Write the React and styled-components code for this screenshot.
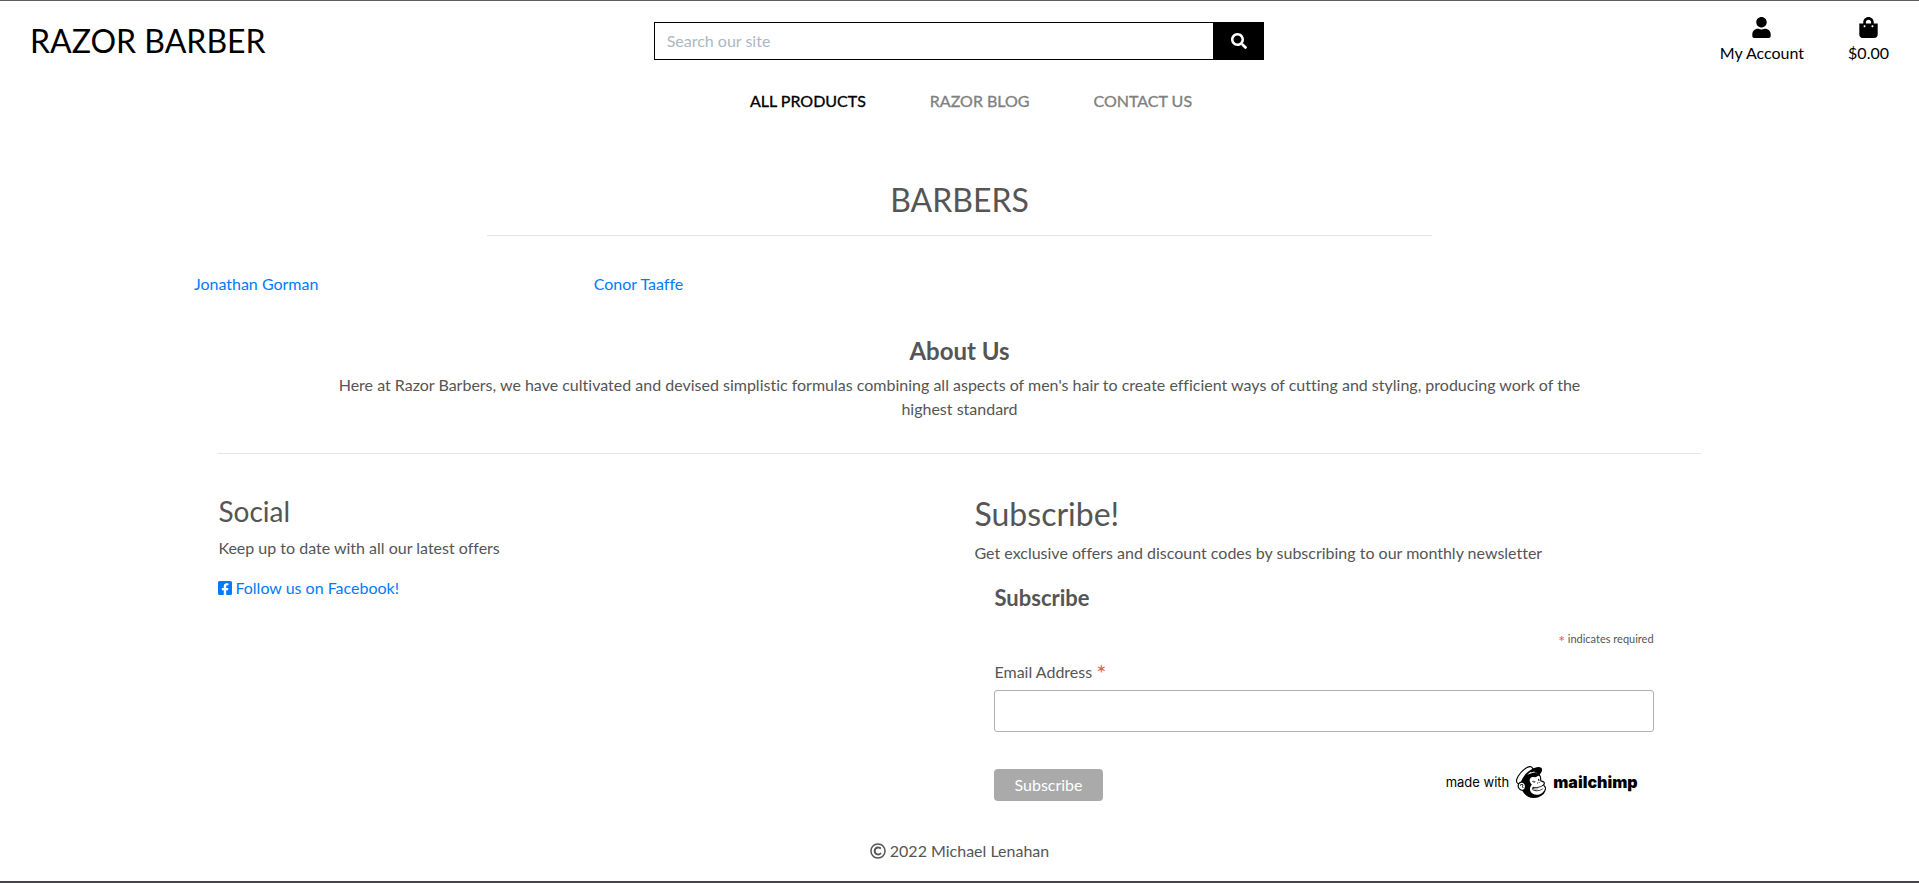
import React from 'react';
import styled, { createGlobalStyle } from 'styled-components';
import { FaUser, FaShoppingBag, FaSearch, FaFacebookSquare, FaRegCopyright } from 'react-icons/fa';
import { SiMailchimp } from 'react-icons/si';

const GlobalStyle = createGlobalStyle`
  *, *::before, *::after { box-sizing: border-box; }
  body {
    margin: 0;
    background: #fff;
    color: #555;
    font: 400 16px/24px Lato, "Liberation Sans", sans-serif;
    font-variant-ligatures: none;
  }
  h1, h2, h3, h4, p, ul { margin: 0; padding: 0; font-weight: 400; }
  ul { list-style: none; }
  a { color: #007bff; text-decoration: none; }
  input, button { font: inherit; margin: 0; }
`;

const Page = styled.div`
  display: flex;
  flex-direction: column;
  min-height: 100vh;
  border-top: 1px solid #5f5b62;
  border-bottom: 2px solid #48444c;
`;

const TopBar = styled.header`
  display: grid;
  grid-template-columns: repeat(3, 1fr);
  align-items: center;
  padding-top: 16px;
`;

const Brand = styled.a`
  padding-left: 30px;
  color: #000;
  font-size: 32px;
  line-height: 38px;
`;

const SearchForm = styled.form`
  display: flex;
  height: 38px;
  margin: 0 15px 0 14px;
`;

const SearchInput = styled.input`
  flex: 1;
  min-width: 0;
  padding: 0 12px;
  border: 1px solid #000;
  border-radius: 0;
  outline: none;
  &::placeholder { color: #aab7c4; opacity: 1; }
`;

const SearchButton = styled.button`
  display: flex;
  align-items: center;
  justify-content: center;
  width: 50px;
  padding: 0;
  border: 0;
  background: #000;
  color: #fff;
`;

const AccountLinks = styled.ul`
  display: flex;
  justify-content: flex-end;
  gap: 44px;
  padding-right: 30px;
`;

const AccountLink = styled.a`
  display: flex;
  flex-direction: column;
  align-items: center;
  gap: 3px;
  color: #000;
`;

const Nav = styled.nav`
  display: flex;
  justify-content: center;
  gap: 64px;
  margin-top: 24px;
  padding-left: 23px;
`;

const NavLink = styled.a`
  color: ${(p) => (p.$active ? '#000' : '#808080')};
  -webkit-text-stroke: 1px ${(p) => (p.$active ? '#000' : '#808080')};
  -webkit-text-stroke-width: thin;
`;

const PageTitle = styled.h2`
  margin-top: 68px;
  font-size: 32px;
  line-height: 38px;
  text-align: center;
`;

const Rule = styled.hr`
  width: ${(p) => p.$width};
  height: 1px;
  margin: ${(p) => p.$space};
  border: 0;
  background: #e5e5e5;
`;

const BarberList = styled.ul`
  display: grid;
  grid-template-columns: repeat(4, 1fr);
  width: 83.3333%;
  margin: 36px auto 0;
`;

const Barber = styled.li`
  padding: 0 34px;
`;

const About = styled.section`
  width: 66.6667%;
  margin: 40px auto 0;
  padding: 0 15px;
  text-align: center;
`;

const StrongHeading = styled.h4`
  margin-bottom: ${(p) => p.$below};
  font-size: ${(p) => p.$size};
  line-height: 29px;
  font-weight: 700;
`;

const Footer = styled.footer`
  width: 78.8%;
  margin: 32px auto 0;
  padding: 0 15px;
`;

const Columns = styled.div`
  display: grid;
  grid-template-columns: repeat(2, 1fr);
  column-gap: 30px;
`;

const SectionHeading = styled.h3`
  margin-bottom: 8px;
  font-size: ${(p) => p.$size};
  line-height: ${(p) => p.$line};
`;

const SocialLink = styled.a`
  display: flex;
  align-items: center;
  gap: 3px;
  margin-top: 16px;

  svg { width: 14px; height: 16px; }
`;

const SignupForm = styled.form`
  margin-top: 18px;
  padding: 0 47px 0 20px;
`;

const RequiredNote = styled.p`
  margin-bottom: 12px;
  font-size: 11px;
  line-height: 18px;
  text-align: right;
`;

const Asterisk = styled.span`
  color: #e85c41;
  font-size: ${(p) => p.$size};
  line-height: 0;
  vertical-align: -4px;
`;

const FieldLabel = styled.label`
  display: block;
  margin-bottom: 6px;
`;

const EmailInput = styled.input`
  display: block;
  width: 100%;
  height: 42px;
  padding: 8px;
  border: 1px solid #abb0b2;
  border-radius: 3px;
`;

const FormActions = styled.div`
  display: flex;
  align-items: flex-start;
  justify-content: space-between;
  margin-top: 34px;
  padding-right: 16px;
`;

const SubmitButton = styled.button`
  height: 32px;
  margin-top: 3px;
  padding: 0 20px;
  border: 0;
  border-radius: 4px;
  background: #aaa;
  color: #fff;
`;

const MailchimpBadge = styled.a`
  display: flex;
  align-items: center;
  gap: 6px;
  color: #000;
  font-family: Inter, sans-serif;
  font-size: 13px;
`;

const MailchimpName = styled.span`
  font-size: 16px;
  font-weight: 900;
`;

const Copyright = styled.p`
  display: flex;
  align-items: center;
  justify-content: center;
  gap: 4px;
  margin-top: 38px;
`;

const barbers = ['Jonathan Gorman', 'Conor Taaffe'];

export default function App() {
  return (
    <Page>
      <GlobalStyle />
      <TopBar>
        <Brand href="#">RAZOR BARBER</Brand>
        <SearchForm>
          <SearchInput type="text" placeholder="Search our site" aria-label="Search our site" />
          <SearchButton type="button" aria-label="Search"><FaSearch size={16} /></SearchButton>
        </SearchForm>
        <AccountLinks>
          <li><AccountLink href="#"><FaUser size={21} />My Account</AccountLink></li>
          <li><AccountLink href="#"><FaShoppingBag size={21} />$0.00</AccountLink></li>
        </AccountLinks>
      </TopBar>
      <Nav>
        <NavLink href="#" $active>ALL PRODUCTS</NavLink>
        <NavLink href="#">RAZOR BLOG</NavLink>
        <NavLink href="#">CONTACT US</NavLink>
      </Nav>
      <main>
        <PageTitle>BARBERS</PageTitle>
        <Rule $width="49.25%" $space="16px auto 0" />
        <BarberList>
          {barbers.map((name) => (
            <Barber key={name}><a href="#">{name}</a></Barber>
          ))}
        </BarberList>
        <About>
          <StrongHeading $size="24px" $below="8px">About Us</StrongHeading>
          <p>
            Here at Razor Barbers, we have cultivated and devised simplistic formulas combining all
            aspects of men's hair to create efficient ways of cutting and styling, producing work of
            the highest standard
          </p>
        </About>
      </main>
      <Footer>
        <Rule $width="100%" $space="0 0 40px" />
        <Columns>
          <section>
            <SectionHeading $size="28px" $line="34px">Social</SectionHeading>
            <p>Keep up to date with all our latest offers</p>
            <SocialLink href="#"><FaFacebookSquare />Follow us on Facebook!</SocialLink>
          </section>
          <section>
            <SectionHeading $size="32px" $line="39px">Subscribe!</SectionHeading>
            <p>Get exclusive offers and discount codes by subscribing to our monthly newsletter</p>
            <SignupForm>
              <StrongHeading $size="22px" $below="18px">Subscribe</StrongHeading>
              <RequiredNote><Asterisk $size="16px">*</Asterisk> indicates required</RequiredNote>
              <FieldLabel htmlFor="email">Email Address <Asterisk $size="24px">*</Asterisk></FieldLabel>
              <EmailInput id="email" type="email" />
              <FormActions>
                <SubmitButton type="button">Subscribe</SubmitButton>
                <MailchimpBadge href="#">
                  made with <SiMailchimp size={32} /> <MailchimpName>mailchimp</MailchimpName>
                </MailchimpBadge>
              </FormActions>
            </SignupForm>
          </section>
        </Columns>
      </Footer>
      <Copyright><FaRegCopyright size={16} />2022 Michael Lenahan</Copyright>
    </Page>
  );
}
